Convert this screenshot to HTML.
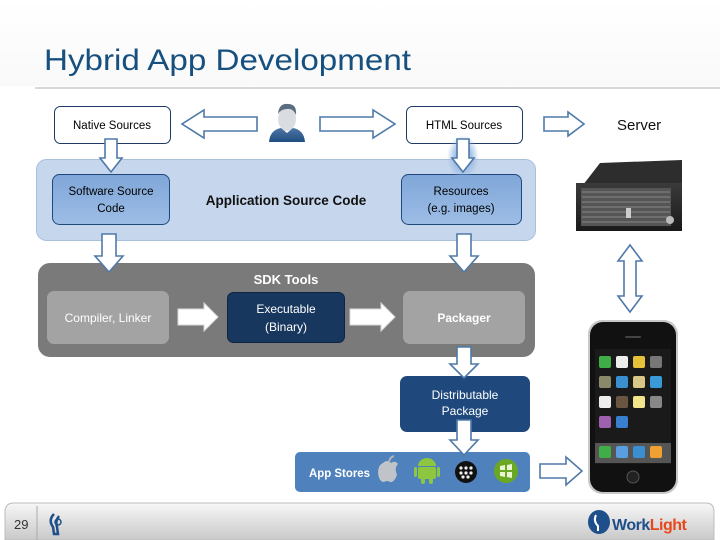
<!DOCTYPE html>
<html><head><meta charset="utf-8"><style>
html,body{margin:0;padding:0;background:#fff;}
svg{display:block;font-family:"Liberation Sans",sans-serif;}
</style></head><body>
<svg width="720" height="540" viewBox="0 0 720 540" xmlns="http://www.w3.org/2000/svg">
<defs>
<linearGradient id="top" x1="0" y1="0" x2="0" y2="1"><stop offset="0" stop-color="#ffffff"/><stop offset="1" stop-color="#f9f9f9"/></linearGradient>
<linearGradient id="foot" x1="0" y1="0" x2="0" y2="1"><stop offset="0" stop-color="#f7f7f7"/><stop offset="1" stop-color="#c9c9c9"/></linearGradient>
<linearGradient id="blueBox" x1="0" y1="0" x2="0" y2="1"><stop offset="0" stop-color="#7fa6d8"/><stop offset="1" stop-color="#9dbde6"/></linearGradient>
<linearGradient id="srv" x1="0" y1="0" x2="0" y2="1"><stop offset="0" stop-color="#3a3a3a"/><stop offset="1" stop-color="#1a1a1a"/></linearGradient>
<linearGradient id="per" x1="0" y1="0" x2="0" y2="1"><stop offset="0" stop-color="#4d76a6"/><stop offset="1" stop-color="#1f4d80"/></linearGradient>
<radialGradient id="glow"><stop offset="0.5" stop-color="#8db3e2"/><stop offset="1" stop-color="#8db3e2" stop-opacity="0"/></radialGradient>
</defs>
<rect x="0" y="0" width="720" height="86" fill="url(#top)"/>
<line x1="35" y1="88" x2="720" y2="88" stroke="#b0b0b0" stroke-width="1"/>
<text x="44" y="70" font-size="30" fill="#17507f" textLength="367" lengthAdjust="spacingAndGlyphs">Hybrid App Development</text>

<rect x="54.5" y="106.5" width="116" height="37" rx="6" fill="#fff" stroke="#1f3864"/>
<text x="112" y="129" font-size="11.5" text-anchor="middle" fill="#000">Native Sources</text>
<rect x="406.5" y="106.5" width="116" height="37" rx="6" fill="#fff" stroke="#1f3864"/>
<text x="464" y="129" font-size="11.5" text-anchor="middle" fill="#000">HTML Sources</text>
<g fill="#fff" stroke="#4f79a8" stroke-width="1.6">
<path d="M257,117 L204,117 L204,110 L182,124 L204,138 L204,131 L257,131Z"/>
<path d="M320,117 L373,117 L373,110 L395,124 L373,138 L373,131 L320,131Z"/>
<path d="M544,117 L568,117 L568,112 L584,124 L568,136 L568,131 L544,131Z"/>
</g>
<ellipse cx="287" cy="119" rx="9" ry="12" fill="#d9dde2"/>
<path d="M278,114 Q279,103 288,104 Q297,104 296,115 Q293,108 287,109 Q281,109 278,114Z" fill="#5b6d82"/>
<path d="M269,142 Q270,130 281,128 L287,133 L293,128 Q304,130 305,142Z" fill="url(#per)"/>
<text x="617" y="130" font-size="15" fill="#111">Server</text>

<rect x="36.5" y="159.5" width="499" height="81" rx="10" fill="#c6d6ec" stroke="#a9bfdc"/>
<rect x="52.5" y="174.5" width="117" height="50" rx="7" fill="url(#blueBox)" stroke="#1f497d"/>
<text x="111" y="195" font-size="11.5" text-anchor="middle" fill="#000">Software Source</text>
<text x="111" y="212" font-size="11.5" text-anchor="middle" fill="#000">Code</text>
<text x="286" y="205" font-size="13.5" font-weight="bold" text-anchor="middle" fill="#111">Application Source Code</text>
<rect x="401.5" y="174.5" width="120" height="50" rx="7" fill="url(#blueBox)" stroke="#1f497d"/>
<text x="461" y="195" font-size="11.5" text-anchor="middle" fill="#000">Resources</text>
<text x="461" y="212" font-size="11.5" text-anchor="middle" fill="#000">(e.g. images)</text>

<rect x="38" y="263" width="497" height="94" rx="12" fill="#7a7a7a"/>
<text x="286" y="284" font-size="13" font-weight="bold" text-anchor="middle" fill="#fff">SDK Tools</text>
<rect x="47" y="291" width="122" height="53" rx="7" fill="#a3a3a3"/>
<text x="108" y="322" font-size="12" text-anchor="middle" fill="#fff">Compiler, Linker</text>
<rect x="227.5" y="292.5" width="117" height="50" rx="6" fill="#17375e" stroke="#0e2440"/>
<text x="286" y="313" font-size="12" text-anchor="middle" fill="#fff">Executable</text>
<text x="286" y="331" font-size="12" text-anchor="middle" fill="#fff">(Binary)</text>
<rect x="403" y="291" width="122" height="53" rx="7" fill="#a3a3a3"/>
<text x="464" y="322" font-size="12" font-weight="bold" text-anchor="middle" fill="#fff">Packager</text>
<g fill="#fff" stroke="#d8d8d8" stroke-width="1">
<path d="M178,309 L204,309 L204,303 L218,317 L204,331 L204,325 L178,325Z"/>
<path d="M350,309 L381,309 L381,303 L395,317 L381,331 L381,325 L350,325Z"/>
</g>

<rect x="400" y="376" width="130" height="56" rx="7" fill="#1f497d"/>
<text x="465" y="399" font-size="12" text-anchor="middle" fill="#fff">Distributable</text>
<text x="465" y="415" font-size="12" text-anchor="middle" fill="#fff">Package</text>

<rect x="295" y="452" width="235" height="40" rx="5" fill="#4f81bd"/>
<text x="309" y="477" font-size="12" font-weight="bold" fill="#fff" textLength="61" lengthAdjust="spacingAndGlyphs">App Stores</text>
<path d="M383,463 Q387,459 391,463 Q395,460 398,464 Q394,468 397,475 Q394,483 390,482 Q387,480 384,482 Q379,482 378,473 Q378,465 383,463Z" fill="#c0c4c8"/>
<path d="M389,462 Q390,457 394,456" stroke="#b0b4b8" stroke-width="2" fill="none"/>
<g fill="#8dc63f">
<path d="M418,466 A9,8 0 0 1 436,466Z"/>
<rect x="418" y="467" width="18" height="12" rx="2"/>
<rect x="414" y="467" width="3" height="10" rx="1.5"/><rect x="437" y="467" width="3" height="10" rx="1.5"/>
<rect x="421" y="478" width="4" height="6" rx="2"/><rect x="429" y="478" width="4" height="6" rx="2"/>
</g>
<circle cx="466" cy="472" r="11" fill="#111"/>
<g fill="#eee"><circle cx="461" cy="468" r="1.6"/><circle cx="466" cy="468" r="1.6"/><circle cx="471" cy="468" r="1.6"/><circle cx="461" cy="473" r="1.6"/><circle cx="466" cy="473" r="1.6"/><circle cx="471" cy="473" r="1.6"/><circle cx="463" cy="477" r="1.6"/><circle cx="468" cy="477" r="1.6"/></g>
<circle cx="506" cy="471" r="12" fill="#6aa823"/>
<path d="M500,466 L505,465 L505,470 L500,470Z M507,465 L512,464 L512,470 L507,470Z M500,472 L505,472 L505,477 L500,476Z M507,472 L512,472 L512,478 L507,477Z" fill="#e8f5d0"/>

<g fill="#fff" stroke="#4f79a8" stroke-width="1.6">
<path d="M105,139 L117,139 L117,158 L122,158 L111,172 L100,158 L105,158Z"/>
<path d="M102,234 L116,234 L116,256 L123,256 L109,272 L95,256 L102,256Z"/>
<path d="M457,234 L471,234 L471,256 L478,256 L464,272 L450,256 L457,256Z"/>
<path d="M457,347 L471,347 L471,364 L478,364 L464,378 L450,364 L457,364Z"/>
<path d="M457,420 L471,420 L471,440 L478,440 L464,455 L450,440 L457,440Z"/>
<path d="M540,464 L566,464 L566,457 L582,471 L566,485 L566,478 L540,478Z"/>
<path d="M630,245 L642,261 L636,261 L636,296 L642,296 L630,312 L618,296 L624,296 L624,261 L618,261Z"/>
</g>
<ellipse cx="463" cy="157" rx="16" ry="22" fill="url(#glow)" opacity="0.8"/>
<path d="M457,139 L469,139 L469,158 L474,158 L463,172 L452,158 L457,158Z" fill="#fff" stroke="#4f79a8" stroke-width="1.6"/>

<path d="M583,185 L600,163 L682,160 L682,183Z" fill="#2d2d2d"/>
<rect x="576" y="183" width="106" height="48" fill="url(#srv)"/>
<rect x="581" y="188" width="90" height="38" fill="#555"/>
<g stroke="#888" stroke-width="1">
<line x1="582" y1="192" x2="670" y2="192"/><line x1="582" y1="197" x2="670" y2="197"/><line x1="582" y1="202" x2="670" y2="202"/><line x1="582" y1="207" x2="670" y2="207"/><line x1="582" y1="212" x2="670" y2="212"/><line x1="582" y1="217" x2="670" y2="217"/><line x1="582" y1="222" x2="670" y2="222"/>
</g>
<rect x="626" y="208" width="5" height="10" fill="#ccc"/>
<circle cx="670" cy="220" r="4" fill="#bbb"/>

<rect x="588" y="320" width="90" height="174" rx="14" fill="#c8c8c8"/>
<rect x="590" y="322" width="86" height="170" rx="13" fill="#111"/>
<rect x="595" y="349" width="76" height="115" fill="#1a1a1a"/>
<g>
<rect x="599" y="356" width="12" height="12" rx="2" fill="#3fae49"/><rect x="616" y="356" width="12" height="12" rx="2" fill="#eee"/><rect x="633" y="356" width="12" height="12" rx="2" fill="#e7c13a"/><rect x="650" y="356" width="12" height="12" rx="2" fill="#777"/>
<rect x="599" y="376" width="12" height="12" rx="2" fill="#8a8a6a"/><rect x="616" y="376" width="12" height="12" rx="2" fill="#3a8fd0"/><rect x="633" y="376" width="12" height="12" rx="2" fill="#d9c788"/><rect x="650" y="376" width="12" height="12" rx="2" fill="#3a9ad8"/>
<rect x="599" y="396" width="12" height="12" rx="2" fill="#eee"/><rect x="616" y="396" width="12" height="12" rx="2" fill="#6a5540"/><rect x="633" y="396" width="12" height="12" rx="2" fill="#f2e48a"/><rect x="650" y="396" width="12" height="12" rx="2" fill="#888"/>
<rect x="599" y="416" width="12" height="12" rx="2" fill="#a060b0"/><rect x="616" y="416" width="12" height="12" rx="2" fill="#3a7ed0"/>
<rect x="595" y="443" width="76" height="20" fill="#555"/>
<rect x="599" y="446" width="12" height="12" rx="2" fill="#3fae49"/><rect x="616" y="446" width="12" height="12" rx="2" fill="#5a9ee0"/><rect x="633" y="446" width="12" height="12" rx="2" fill="#3a8fd0"/><rect x="650" y="446" width="12" height="12" rx="2" fill="#f0a030"/>
</g>
<circle cx="633" cy="477" r="6" fill="#222" stroke="#555"/>
<rect x="625" y="336" width="16" height="2" rx="1" fill="#444"/>

<path d="M5,540 L5,512 Q5,503 14,503 L706,503 Q714,503 714,512 L714,540Z" fill="url(#foot)" stroke="#bdbdbd"/>
<line x1="37" y1="506" x2="37" y2="540" stroke="#aaa"/>
<text x="14" y="529" font-size="13" fill="#333">29</text>
<path d="M54,514 Q48,520 53,527 L54,534 L58,534 L57,527 Q55,521 59,516" fill="none" stroke="#1f4f8a" stroke-width="2.5"/>
<circle cx="58" cy="522" r="3" fill="none" stroke="#1f4f8a" stroke-width="1.5"/>
<ellipse cx="599" cy="522" rx="11" ry="12" fill="#1f4f8a"/>
<path d="M596,515 Q593,521 598,526 L598,531" stroke="#fff" stroke-width="2" fill="none"/>
<text x="612" y="530" font-size="16" font-weight="bold" fill="#1f4f8a" letter-spacing="-0.5">Work<tspan fill="#e8481c">Light</tspan></text>
</svg>
</body></html>
